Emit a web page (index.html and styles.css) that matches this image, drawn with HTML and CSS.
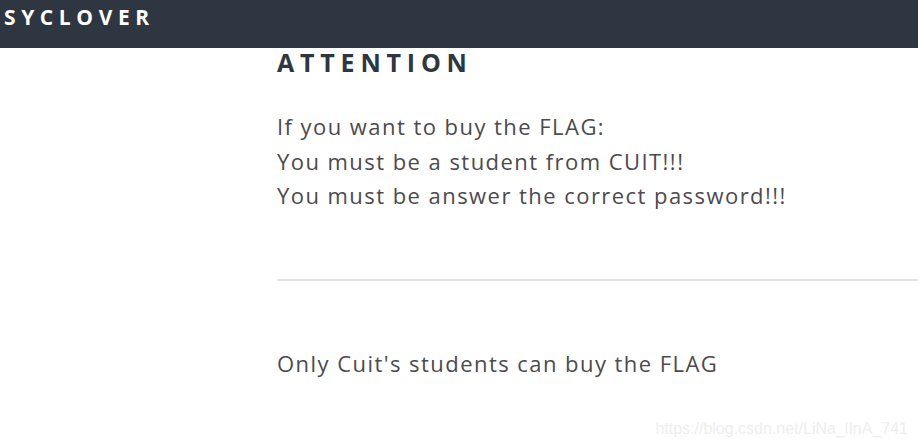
FILE: index.html
```html
<!DOCTYPE html>
<html>
<head>
<meta charset="utf-8">
<link rel="stylesheet" href="styles.css">
</head>
<body>
<header class="topbar">
  <div class="brand">SYCLOVER</div>
</header>
<main class="content">
  <h2 class="title">ATTENTION</h2>
  <p class="lead">If you want to buy the FLAG:<br>You must be a student from CUIT!!!<br>You must be answer the correct password!!!</p>
  <hr class="rule">
  <p class="note">Only Cuit's students can buy the FLAG</p>
</main>
<div class="watermark">https://blog.csdn.net/LiNa_lInA_741</div>
</body>
</html>
```
FILE: styles.css
```css
html, body {
  margin: 0;
  padding: 0;
  background: #ffffff;
  overflow: hidden;
}
body {
  font-family: "Open Sans", "Noto Sans", sans-serif;
  width: 918px;
  height: 444px;
  position: relative;
}
.topbar {
  height: 48px;
  background: #2e3641;
  display: flex;
  align-items: flex-start;
  padding-left: 4px;
}
.brand {
  color: #ffffff;
  font-weight: 700;
  font-size: 21px;
  letter-spacing: 5.6px;
  line-height: 34px;
}
.content {
  margin-left: 277px;
}
.title {
  margin: 0;
  padding-top: 1px;
  color: #2e3641;
  font-weight: 700;
  font-size: 25px;
  letter-spacing: 5.8px;
  line-height: 26px;
}
.lead {
  margin: 34px 0 0 0;
  color: #4d4a4e;
  font-size: 22px;
  letter-spacing: 1.45px;
  line-height: 34.5px;
}
.rule {
  margin: 66px 0 0 0;
  border: 0;
  border-top: 2px solid #e0e0e0;
  height: 0;
}
.note {
  margin: 65px 0 0 0;
  color: #4d4a4e;
  font-size: 22px;
  letter-spacing: 1.45px;
  line-height: 34px;
}
.watermark {
  position: absolute;
  right: 10px;
  bottom: 6px;
  font-family: "Liberation Sans", Arial, sans-serif;
  font-size: 16px;
  color: #eeeeee;
}
```
